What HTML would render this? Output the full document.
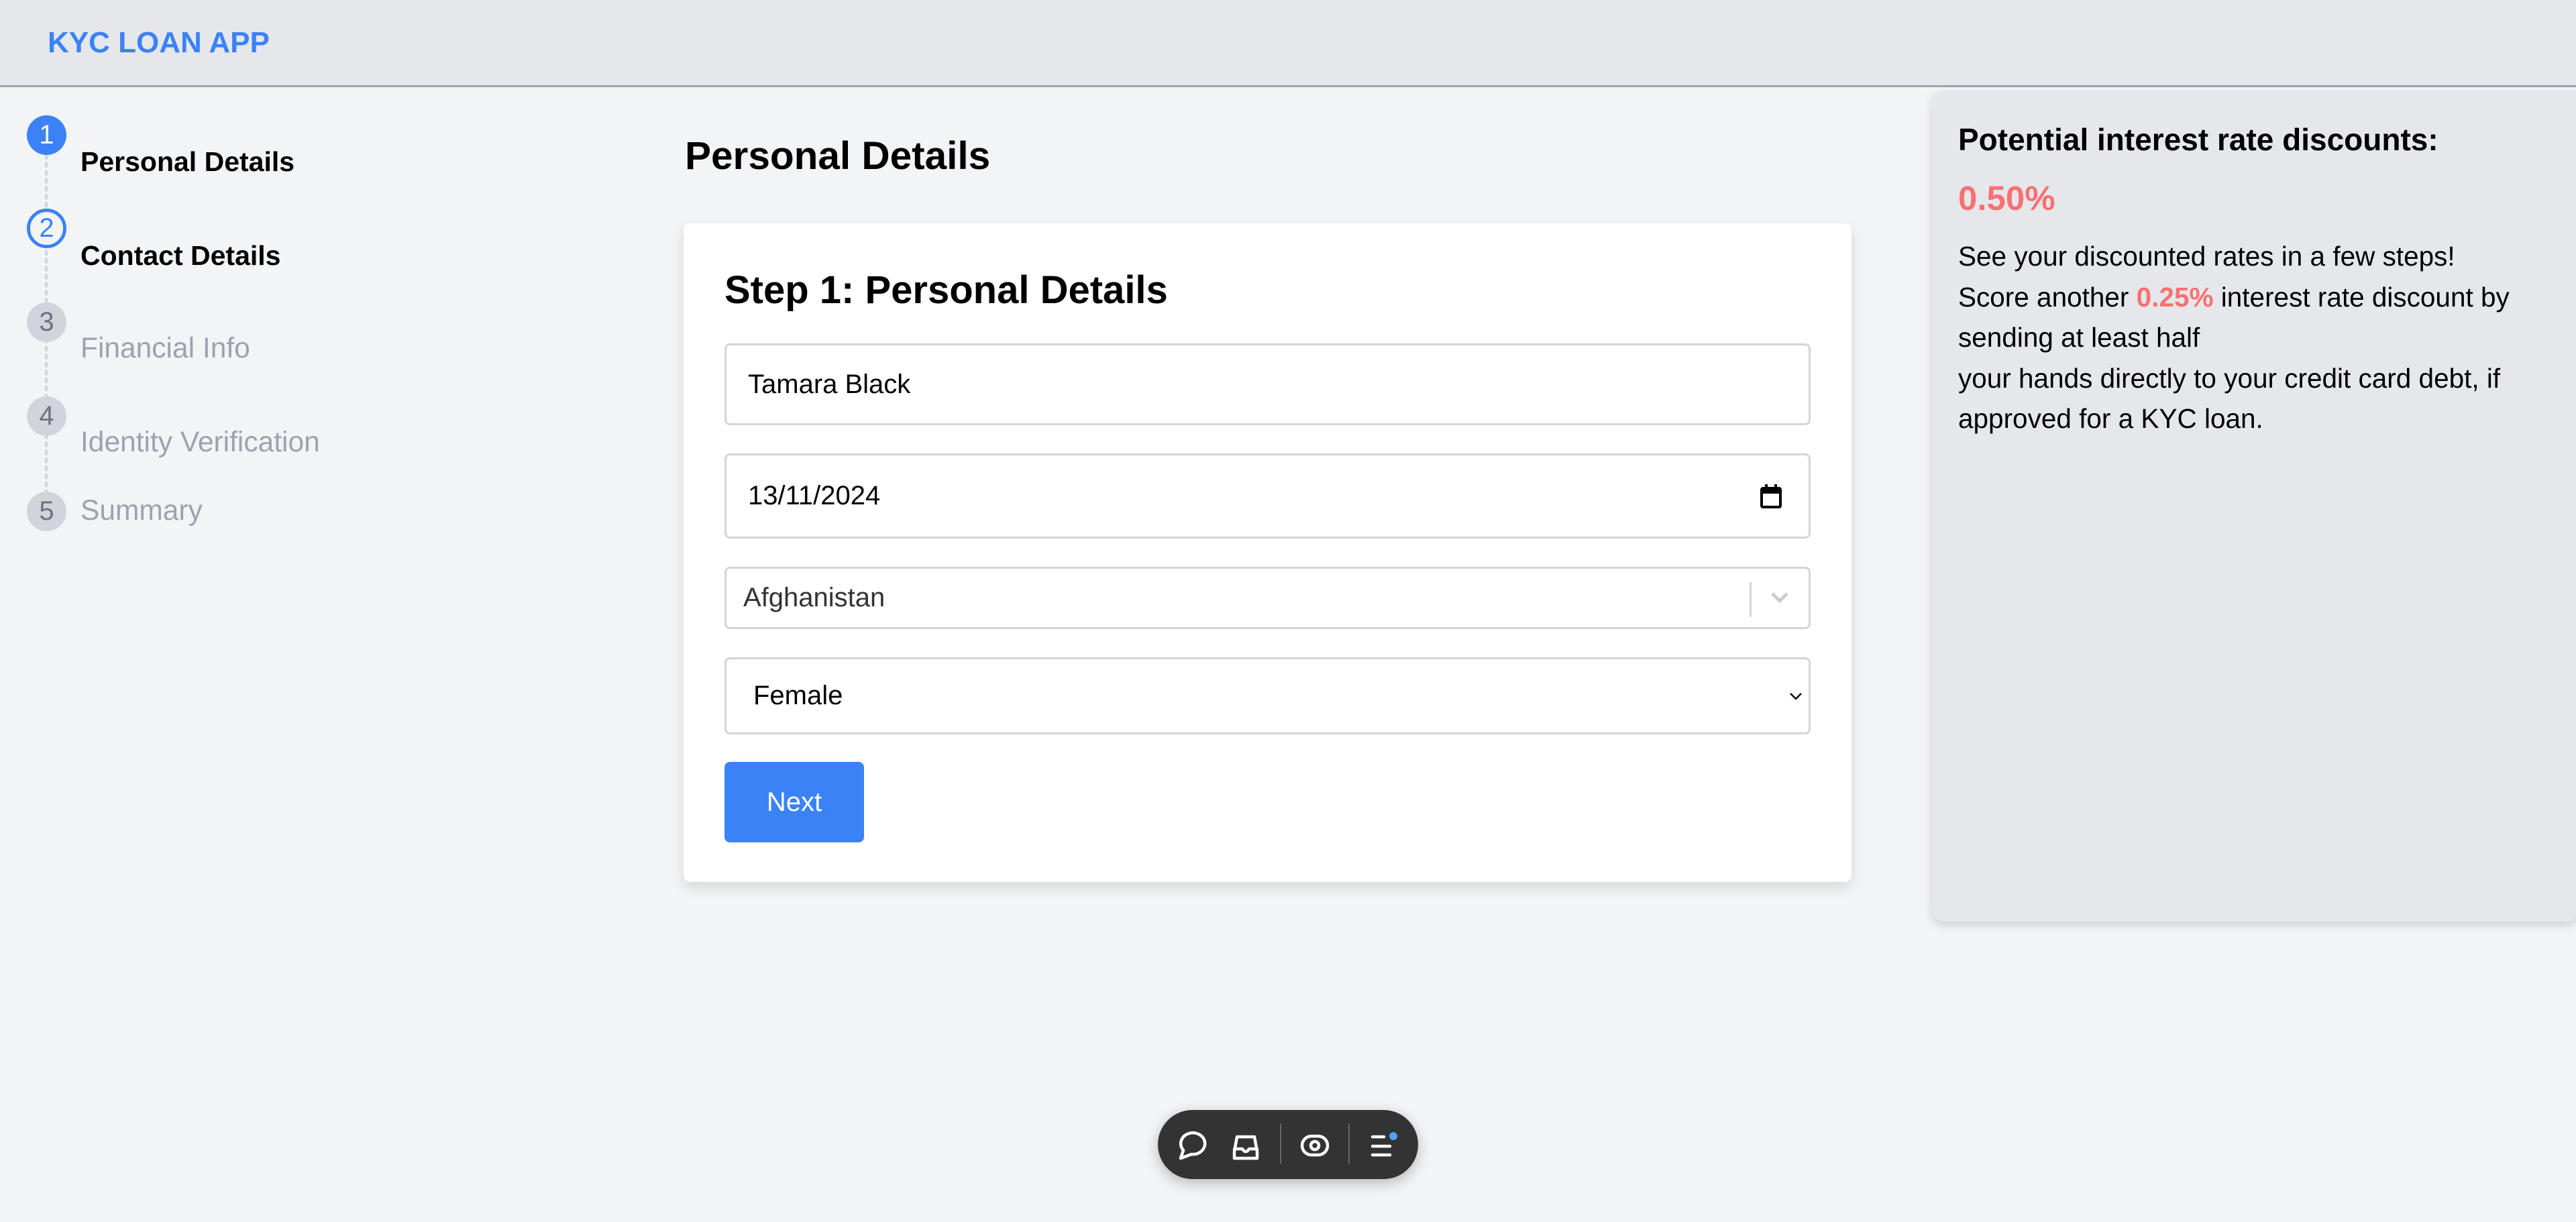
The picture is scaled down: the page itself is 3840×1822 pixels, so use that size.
<!DOCTYPE html>
<html><head><meta charset="utf-8"><style>
*{box-sizing:border-box;margin:0;padding:0}
body{width:3840px;height:1822px;background:#f3f4f6;font-family:"Liberation Sans",sans-serif;position:relative;overflow:hidden;color:#000}
.abs{position:absolute;white-space:nowrap}
.hdr{left:0;top:0;width:3840px;height:130px;background:#e5e7eb;border-bottom:3px solid #9ca3af}
.circ{position:absolute;left:40px;width:59px;height:59px;border-radius:50%;font-size:40px;line-height:59px;text-align:center}
.lbl{position:absolute;left:120px;font-size:42.5px;line-height:50px}
.inp{position:absolute;left:1080px;width:1619px;border:3px solid #d1d5db;border-radius:8px;background:#fff;font-size:40px}
</style></head><body>
<div class="abs hdr"></div>
<div class="abs" style="left:71px;top:34px;font-size:44px;font-weight:bold;color:#3b82f6;line-height:60px">KYC LOAN APP</div>

<div class="abs" style="left:67px;top:230px;height:520px;border-left:4px dashed #d1d5db"></div>
<div class="circ" style="top:172px;background:#3b82f6;color:#fff">1</div>
<div class="circ" style="top:311px;background:#f3f4f6;border:5px solid #3b82f6;color:#3b82f6;line-height:49px">2</div>
<div class="circ" style="top:451px;background:#d1d5db;color:#6b7280">3</div>
<div class="circ" style="top:591px;background:#d1d5db;color:#6b7280">4</div>
<div class="circ" style="top:733px;background:#d1d5db;color:#6b7280">5</div>
<div class="lbl" style="top:216px;font-weight:bold;font-size:41px">Personal Details</div>
<div class="lbl" style="top:356px;font-weight:bold;font-size:41px">Contact Details</div>
<div class="lbl" style="top:495px;color:#9ca3af">Financial Info</div>
<div class="lbl" style="top:635px;color:#9ca3af">Identity Verification</div>
<div class="lbl" style="top:737px;color:#9ca3af">Summary</div>

<div class="abs" style="left:1021px;top:198px;font-size:58.5px;font-weight:bold;line-height:70px">Personal Details</div>
<div class="abs" style="left:1019px;top:333px;width:1741px;height:982px;background:#fff;border-radius:10px;box-shadow:0 8px 20px rgba(0,0,0,.12)"></div>
<div class="abs" style="left:1080px;top:398px;font-size:58px;font-weight:bold;line-height:70px">Step 1: Personal Details</div>
<div class="inp" style="top:512px;height:122px;line-height:116px;padding-left:32px">Tamara Black</div>
<div class="inp" style="top:676px;height:127px;line-height:121px;padding-left:32px">13/11/2024
<svg style="position:absolute;left:1540px;top:42px" width="34" height="38" viewBox="0 0 34 38"><rect x="3" y="7" width="28" height="28" rx="2" fill="none" stroke="#000" stroke-width="4"/><rect x="3" y="7" width="28" height="8" fill="#000"/><rect x="8" y="1" width="4" height="8" fill="#000"/><rect x="22" y="1" width="4" height="8" fill="#000"/></svg></div>
<div class="inp" style="top:845px;height:93px;line-height:87px;padding-left:25px;color:#333">Afghanistan
<div style="position:absolute;left:1525px;top:20px;width:3px;height:52px;background:#d1d5db"></div>
<svg style="position:absolute;left:1555px;top:32px" width="30" height="22" viewBox="0 0 30 22"><path d="M4 5 L15 16 L26 5" fill="none" stroke="#ccc" stroke-width="5"/></svg></div>
<div class="inp" style="top:980px;height:115px;line-height:109px;padding-left:40px">Female
<svg style="position:absolute;left:1584px;top:48px" width="20" height="14" viewBox="0 0 20 14"><path d="M2 3 L10 11 L18 3" fill="none" stroke="#000" stroke-width="2.5"/></svg></div>
<div class="abs" style="left:1080px;top:1136px;width:208px;height:120px;background:#3b82f6;border-radius:8px;color:#fff;font-size:40px;line-height:120px;text-align:center">Next</div>

<div class="abs" style="left:2880px;top:135px;width:960px;height:1239px;background:#e5e7eb;border-radius:18px 0 12px 18px;box-shadow:0 6px 14px rgba(0,0,0,.15)"></div>
<div class="abs" style="left:2919px;top:178px;font-size:46px;font-weight:bold;line-height:60px">Potential interest rate discounts:</div>
<div class="abs" style="left:2919px;top:266px;font-size:51px;font-weight:bold;color:#f87171;line-height:60px">0.50%</div>
<div class="abs" style="left:2919px;top:352px;font-size:40.5px;line-height:60.5px">See your discounted rates in a few steps!<br>Score another <b style="color:#f87171">0.25%</b> interest rate discount by<br>sending at least half<br>your hands directly to your credit card debt, if<br>approved for a KYC loan.</div>

<div class="abs" style="left:1726px;top:1655px;width:388px;height:103px;background:#333;border-radius:52px;box-shadow:0 6px 20px rgba(0,0,0,.25)"></div>
<svg class="abs" style="left:1726px;top:1655px" width="388" height="103" viewBox="0 0 388 103">
<g fill="none" stroke="#fff" stroke-width="4.5" stroke-linejoin="round" stroke-linecap="round">
<path d="M34 72 L38 60 A18 16 0 1 1 50 66 Z"/>
<path d="M114 62 L118 40 H144 L148 62 V72 H114 Z M114 58 H126 Q131 66 136 58 H148"/>
<rect x="215" y="39" width="38" height="28" rx="14"/><circle cx="234" cy="53" r="6"/>
<path d="M320 40 H337 M320 54 H346 M320 67 H346"/>
</g>
<rect x="182" y="20" width="2" height="60" fill="#666"/><rect x="284" y="20" width="2" height="60" fill="#666"/>
<circle cx="351" cy="39" r="6" fill="#4ea1ff"/>
</svg>
</body></html>
